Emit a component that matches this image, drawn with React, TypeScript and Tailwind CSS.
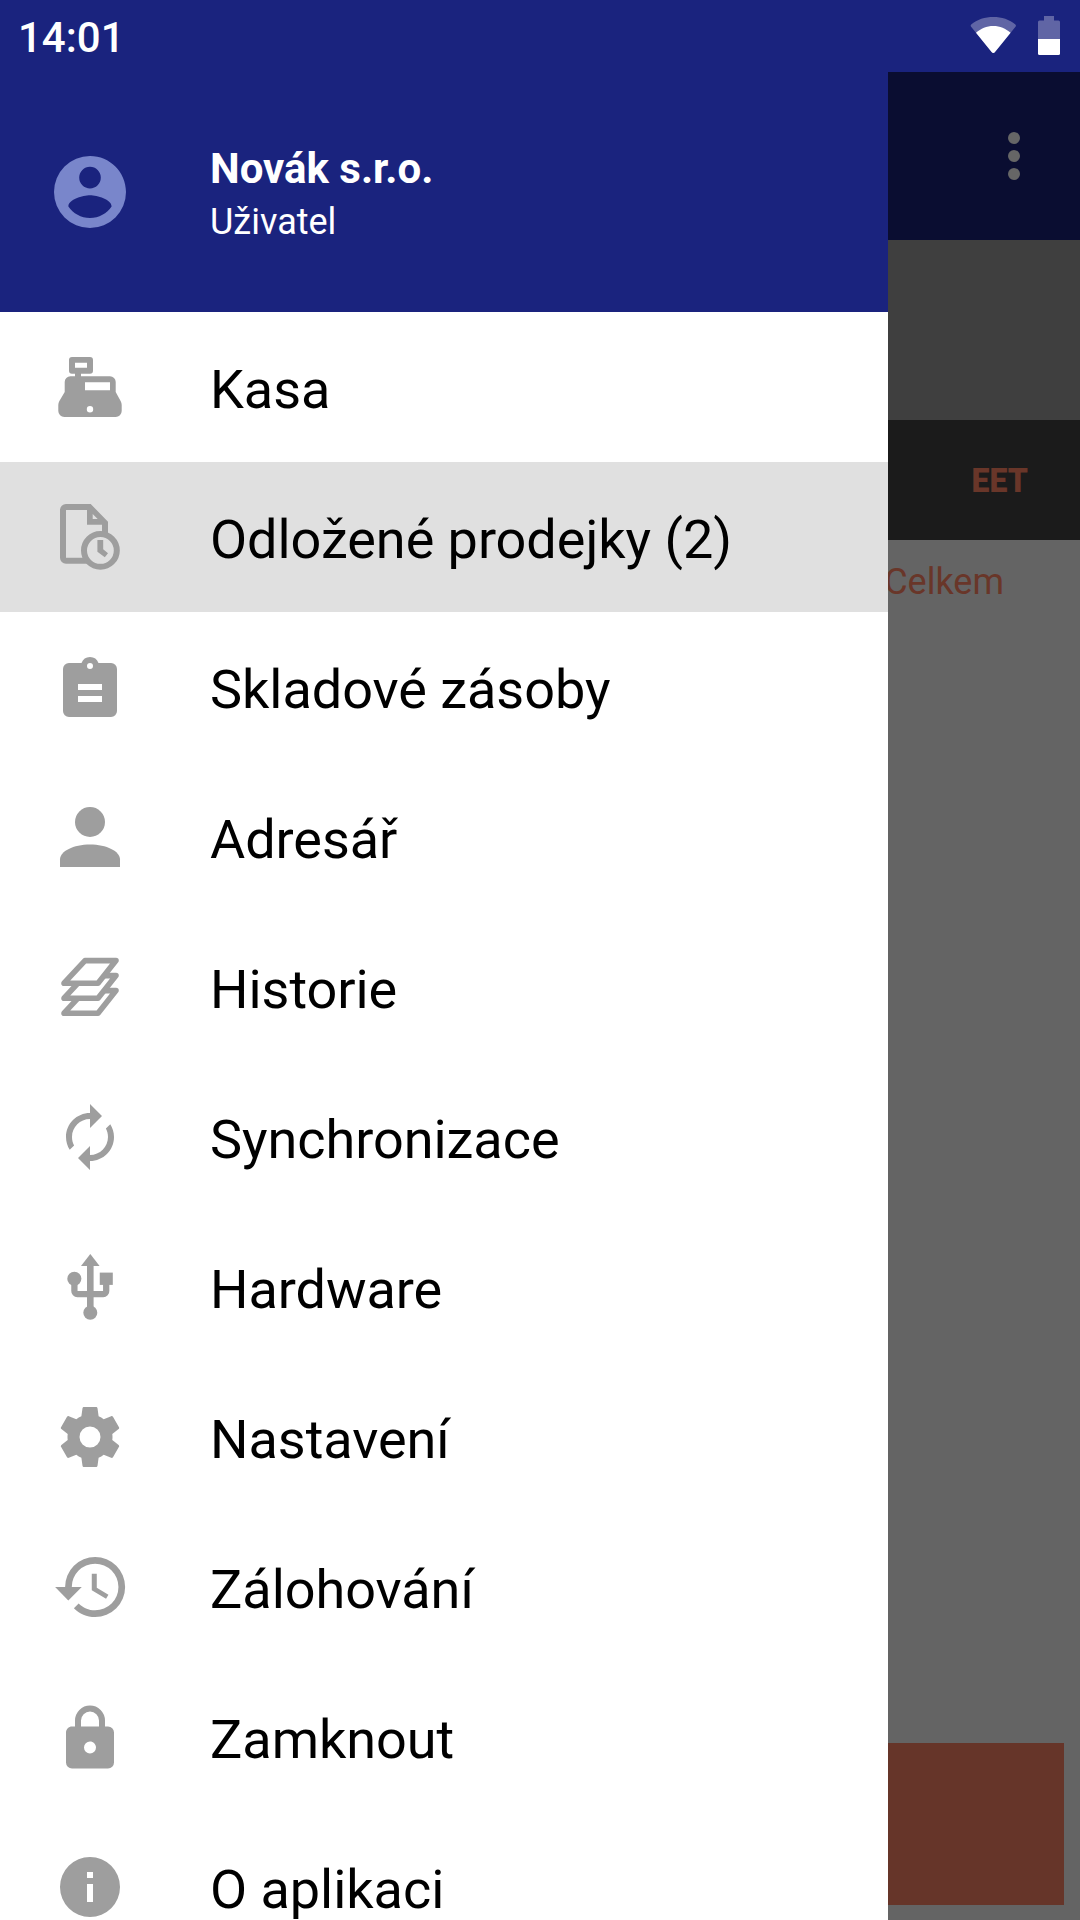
import type { ReactNode } from "react";

type MenuItem = {
  label: string;
  icon: ReactNode;
  active?: boolean;
};

const items: MenuItem[] = [
  {
    label: "Kasa",
    icon: (
      <svg viewBox="0 0 72 72" className="w-full h-full" fill="currentColor" fillRule="evenodd">
        <path d="M18 6H36A3 3 0 0 1 39 9V19.7A3 3 0 0 1 36 22.7H27V25.3H56A5.7 5.7 0 0 1 61.7 31V41L66.6 50Q67.7 52 67.7 54V60A6 6 0 0 1 61.7 66H10.3A6 6 0 0 1 4.3 60V54Q4.3 52 5.4 50L10.7 41V31A5.7 5.7 0 0 1 16.4 25.3H21V22.7H18A3 3 0 0 1 15 19.7V9A3 3 0 0 1 18 6ZM21 11.8V16.8H33V11.8ZM31 31.3V39.3H56V31.3ZM36 55.1A3.2 3.2 0 1 0 36 61.5A3.2 3.2 0 1 0 36 55.1Z" />
      </svg>
    ),
  },
  {
    label: "Odložené prodejky (2)",
    active: true,
    icon: (
      <svg viewBox="0 0 72 72" className="w-full h-full" fill="currentColor" fillRule="evenodd">
        <path d="M12 3H36.7L54 20.8V36H48V23.7H33V9H12V56.8H34V62.8H12A6 6 0 0 1 6 56.8V9A6 6 0 0 1 12 3ZM38.7 13V18H43.7Z" />
        <circle cx="46.4" cy="49.4" r="16.4" fill="#e0e0e0" stroke="currentColor" strokeWidth="6" />
        <path d="M43.4 39H49.2V48.3L54 52.2L50.8 56.2L43.4 50.8Z" />
      </svg>
    ),
  },
  {
    label: "Skladové zásoby",
    icon: (
      <svg viewBox="0 0 24 24" className="w-full h-full" fill="currentColor" fillRule="evenodd">
        <path d="M5 4H9.17A3 3 0 0 1 14.83 4H19A2 2 0 0 1 21 6V20A2 2 0 0 1 19 22H5A2 2 0 0 1 3 20V6A2 2 0 0 1 5 4ZM12 4A1 1 0 1 0 12 6A1 1 0 1 0 12 4ZM8 11V13H16V11ZM8 15V17H16V15Z" />
      </svg>
    ),
  },
  {
    label: "Adresář",
    icon: (
      <svg viewBox="0 0 24 24" className="w-full h-full" fill="currentColor">
        <circle cx="12" cy="7" r="5" />
        <path d="M12 14.5C17.52 14.5 22 16.74 22 19.5V22H2V19.5C2 16.74 6.48 14.5 12 14.5Z" />
      </svg>
    ),
  },
  {
    label: "Historie",
    icon: (
      <svg viewBox="0 0 72 72" className="w-full h-full" fill="none" stroke="currentColor" strokeWidth="5.6" strokeLinejoin="round">
        <path d="M31 9.6H62L44 32.2H10Z" />
        <path d="M50 24.6H62L44 47.2H10L24 32.2" />
        <path d="M50 39.6H62L44 62.2H10L24 47.2" />
      </svg>
    ),
  },
  {
    label: "Synchronizace",
    icon: (
      <svg viewBox="0 0 24 24" className="w-full h-full" fill="currentColor">
        <path d="M12 6v3l4-4-4-4v3c-4.42 0-8 3.58-8 8 0 1.57.46 3.03 1.24 4.26L6.7 14.8c-.45-.83-.7-1.79-.7-2.8 0-3.31 2.69-6 6-6zm6.76 1.74L17.3 9.2c.44.84.7 1.79.7 2.8 0 3.31-2.69 6-6 6v-3l-4 4 4 4v-3c4.42 0 8-3.58 8-8 0-1.57-.46-3.03-1.24-4.26z" />
      </svg>
    ),
  },
  {
    label: "Hardware",
    icon: (
      <svg viewBox="0 0 24 24" className="w-full h-full" fill="currentColor">
        <path d="M12.1 1L15.2 5H9Z" />
        <path d="M11 4.5H13.2V19.500H11Z" />
        <circle cx="6.78" cy="9.25" r="2.35" />
        <circle cx="12.1" cy="20.6" r="2.33" />
        <path d="M15.25 7.2H19.600V11.300H15.250Z" />
        <path d="M6.800 10V13.300A1 1 0 0 0 7.800 14.350H16.400A1 1 0 0 0 17.400 13.300V11" fill="none" stroke="currentColor" strokeWidth="2.1" />
      </svg>
    ),
  },
  {
    label: "Nastavení",
    icon: (
      <svg viewBox="0 0 24 24" className="w-full h-full" fill="currentColor">
        <path d="M12,15.5A3.5,3.5 0 0,1 8.5,12A3.5,3.5 0 0,1 12,8.5A3.5,3.5 0 0,1 15.5,12A3.5,3.5 0 0,1 12,15.5M19.43,12.97C19.47,12.65 19.5,12.33 19.5,12C19.5,11.67 19.47,11.34 19.43,11L21.54,9.37C21.73,9.22 21.78,8.95 21.66,8.73L19.66,5.27C19.54,5.05 19.27,4.96 19.05,5.05L16.56,6.05C16.04,5.66 15.5,5.32 14.87,5.07L14.5,2.42C14.46,2.18 14.25,2 14,2H10C9.75,2 9.54,2.18 9.5,2.42L9.13,5.07C8.5,5.32 7.96,5.66 7.44,6.05L4.95,5.05C4.73,4.96 4.46,5.05 4.34,5.27L2.34,8.73C2.21,8.95 2.27,9.22 2.46,9.37L4.57,11C4.53,11.34 4.5,11.67 4.5,12C4.5,12.33 4.53,12.65 4.57,12.97L2.46,14.63C2.27,14.78 2.21,15.05 2.34,15.27L4.34,18.73C4.46,18.95 4.73,19.03 4.95,18.95L7.44,17.94C7.96,18.34 8.5,18.68 9.13,18.93L9.5,21.58C9.54,21.82 9.75,22 10,22H14C14.25,22 14.46,21.82 14.5,21.58L14.87,18.93C15.5,18.67 16.04,18.34 16.56,17.94L19.05,18.95C19.27,19.03 19.54,18.95 19.66,18.73L21.66,15.27C21.78,15.05 21.73,14.78 21.54,14.63L19.43,12.97Z" />
      </svg>
    ),
  },
  {
    label: "Zálohování",
    icon: (
      <svg viewBox="0 0 24 24" className="w-full h-full" fill="currentColor">
        <path
          transform="translate(-.74 -1.333) scale(1.111)"
          d="M13.5,8H12V13L16.28,15.54L17,14.33L13.5,12.25V8M13,3A9,9 0 0,0 4,12H1L4.96,16.03L9,12H6A7,7 0 0,1 13,5A7,7 0 0,1 20,12A7,7 0 0,1 13,19C11.07,19 9.32,18.21 8.06,16.94L6.64,18.36C8.27,20 10.5,21 13,21A9,9 0 0,0 22,12A9,9 0 0,0 13,3"
        />
      </svg>
    ),
  },
  {
    label: "Zamknout",
    icon: (
      <svg viewBox="0 0 24 24" className="w-full h-full" fill="currentColor">
        <path
          transform="translate(0 .5)"
          d="M12,17A2,2 0 0,0 14,15C14,13.89 13.1,13 12,13A2,2 0 0,0 10,15A2,2 0 0,0 12,17M18,8A2,2 0 0,1 20,10V20A2,2 0 0,1 18,22H6A2,2 0 0,1 4,20V10C4,8.89 4.9,8 6,8H7V6A5,5 0 0,1 12,1A5,5 0 0,1 17,6V8H18M12,3A3,3 0 0,0 9,6V8H15V6A3,3 0 0,0 12,3Z"
        />
      </svg>
    ),
  },
  {
    label: "O aplikaci",
    icon: (
      <svg viewBox="0 0 24 24" className="w-full h-full" fill="currentColor">
        <path d="M13,9H11V7H13M13,17H11V11H13M12,2A10,10 0 0,0 2,12A10,10 0 0,0 12,22A10,10 0 0,0 22,12A10,10 0 0,0 12,2Z" />
      </svg>
    ),
  },
];

function StatusBar() {
  return (
    <header className="h-[72px] shrink-0 bg-[#1a237e] flex items-center justify-between pl-[18px] pr-5 text-white">
      <span className="pt-[3px] text-[42px] leading-[69px] font-medium">14:01</span>

      <div className="flex items-center gap-[21px]">
        <svg viewBox="0 0 48 72" className="w-12 h-[72px]">
          <path
            d="M24.3 53Q23.3 53 22.6 52L1.9 26.6Q1.2 25.4 2.2 24.4C8 19.5 16 17 24.3 17S40.6 19.5 46.4 24.4Q47.4 25.4 46.7 26.6L26 52Q25.3 53 24.3 53Z"
            fill="#6065a5"
          />
          <path
            d="M24.3 53Q23.3 53 22.6 52L7 32.8C12 28.5 17.5 26 24.3 26S36.6 28.5 41.6 32.8L26 52Q25.3 53 24.3 53Z"
            fill="#fff"
          />
        </svg>

        <svg viewBox="0 0 22 72" className="w-[22px] h-[72px]">
          <path d="M6 16H16V20.5H20.5A1.5 1.5 0 0 1 22 22V39H0V22A1.5 1.5 0 0 1 1.5 20.5H6Z" fill="#6065a5" />
          <path d="M0 39H22V53.5A1.5 1.5 0 0 1 20.5 55H1.5A1.5 1.5 0 0 1 0 53.5Z" fill="#fff" />
        </svg>
      </div>
    </header>
  );
}

// Cash register screen behind the open drawer, already dimmed
function RegisterScreen() {
  return (
    <main className="h-full bg-[#646464] flex flex-col">
      <div className="h-[168px] bg-[#0a0d31] flex items-center justify-end pr-[60px]">
        <div className="flex flex-col gap-1.5">
          <span className="w-3 h-3 rounded-full bg-[#666666]"></span>
          <span className="w-3 h-3 rounded-full bg-[#666666]"></span>
          <span className="w-3 h-3 rounded-full bg-[#666666]"></span>
        </div>
      </div>

      <div className="h-[180px] bg-[#3f3f3f]"></div>

      <div className="h-[120px] bg-[#1b1b1b] flex items-center justify-end pr-[52px] text-[#693629]">
        <span className="text-[34px] leading-none font-black origin-right scale-x-[0.94]">EET</span>
      </div>

      <div className="flex justify-end pt-[18px] pr-[76px] text-[#693629]">
        <span className="text-[36px] leading-[48px]">Celkem</span>
      </div>

      <div className="mt-auto mb-[15px] mx-4 h-[162px] bg-[#663529]"></div>
    </main>
  );
}

function Drawer() {
  return (
    <nav className="absolute inset-y-0 left-0 w-[888px] bg-white overflow-hidden">
      <div className="h-[240px] bg-[#1a237e] flex items-center pl-[54px] text-white">
        <svg viewBox="2 2 20 20" className="w-[72px] h-[72px] text-[#7986cb]" fill="currentColor">
          <path d="M12,19.2C9.5,19.2 7.29,17.92 6,16C6.03,14 10,12.9 12,12.9C14,12.9 17.97,14 18,16C16.71,17.92 14.5,19.2 12,19.2M12,5A3,3 0 0,1 15,8A3,3 0 0,1 12,11A3,3 0 0,1 9,8A3,3 0 0,1 12,5M12,2A10,10 0 0,0 2,12A10,10 0 0,0 12,22A10,10 0 0,0 22,12C22,6.47 17.5,2 12,2Z" />
        </svg>

        <div className="ml-[84px] pt-[3px]">
          <p className="text-[42px] leading-[57px] font-bold">Novák s.r.o.</p>
          <p className="text-[36px] leading-[50px]">Uživatel</p>
        </div>
      </div>

      <ul>
        {items.map((item) => (
          <li
            key={item.label}
            className={`h-[150px] flex items-center pl-[54px] ${item.active ? "bg-[#e0e0e0]" : "bg-white"}`}
          >
            <span className="w-[72px] h-[72px] text-[#9e9e9e]">{item.icon}</span>
            <span className="ml-[84px] pt-[5px] text-[54px] leading-[72px] tracking-[-0.04px] text-black">{item.label}</span>
          </li>
        ))}
      </ul>
    </nav>
  );
}

export default function App() {
  return (
    <div className="w-[1080px] h-[1920px] overflow-hidden flex flex-col font-['Roboto',sans-serif]">
      <StatusBar />

      <div className="relative flex-1 min-h-0">
        <RegisterScreen />
        <Drawer />
      </div>
    </div>
  );
}
